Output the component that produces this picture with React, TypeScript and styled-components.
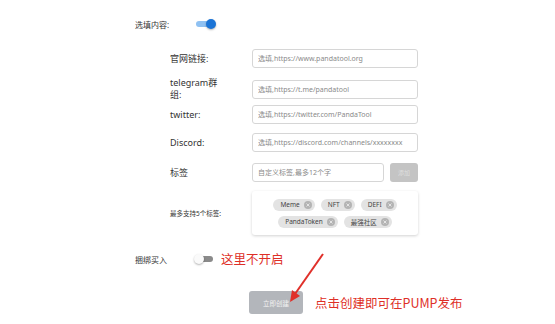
import styled, { createGlobalStyle } from 'styled-components';

const GlobalStyle = createGlobalStyle`
  html, body {
    margin: 0;
    padding: 0;
    background: #fff;
  }
  body {
    font-family: "Noto Sans", "Noto Sans CJK SC", sans-serif;
    color: #333;
  }
`;

const links = [
  { label: '官网链接:', placeholder: '选填,https://www.pandatool.org' },
  { label: 'telegram群\n组:', placeholder: '选填,https://t.me/pandatool' },
  { label: 'twitter:', placeholder: '选填,https://twitter.com/PandaTool' },
  { label: 'Discord:', placeholder: '选填,https://discord.com/channels/xxxxxxxx' },
];

const tags = ['Meme', 'NFT', 'DEFI', 'PandaToken', '最强社区'];

const Switch = ({ on }: { on: boolean }) => (
  <Track $on={on}>
    <Knob $on={on} />
  </Track>
);

const ChipClose = () => (
  <svg width="8" height="8" viewBox="0 0 8 8">
    <circle cx="4" cy="4" r="4" fill="#b4b4b4" />
    <path d="M2.5 2.5 L5.5 5.5 M5.5 2.5 L2.5 5.5" stroke="#e4e4e4" strokeWidth="1" />
  </svg>
);

const App = () => {
  return (
    <Page>
      <GlobalStyle />
      <Form>
        <TopRow>
          <OuterLabel>选填内容:</OuterLabel>
          <Switch on />
        </TopRow>

        <Section>
          {links.map((l) => (
            <Row key={l.label}>
              <Label>{l.label}</Label>
              <Input placeholder={l.placeholder} />
            </Row>
          ))}
          <Row $extraTop={2}>
            <Label>标签</Label>
            <TagInputWrap>
              <Input placeholder="自定义标签,最多12个字" />
              <AddButton>添加</AddButton>
            </TagInputWrap>
          </Row>
          <TagsRow>
            <SmallLabel>最多支持5个标签:</SmallLabel>
            <TagBox>
              {tags.map((t) => (
                <Chip key={t}>
                  {t}
                  <ChipClose />
                </Chip>
              ))}
            </TagBox>
          </TagsRow>
        </Section>

        <BundleRow>
          <OuterLabel>捆绑买入</OuterLabel>
          <Switch on={false} />
          <Note $indent={8}>这里不开启</Note>
        </BundleRow>

        <SubmitRow>
          <SubmitButton>立即创建</SubmitButton>
          <Note>点击创建即可在PUMP发布</Note>
        </SubmitRow>
      </Form>

      <Arrow width="60" height="60" viewBox="0 0 60 60">
        <path d="M36 2 L8 42" stroke="#e0302a" strokeWidth="2" fill="none" />
        <path d="M3 50 L5 38 L13 44 Z" fill="#e0302a" />
      </Arrow>
    </Page>
  );
};

const Page = styled.div`
  position: relative;
  width: 555px;
  height: 324px;
  overflow: hidden;
`;

const Form = styled.div`
  padding: 16px 0 0 135px;
`;

const TopRow = styled.div`
  display: flex;
  align-items: center;
  height: 16px;
`;

const OuterLabel = styled.div`
  width: 61px;
  font-size: 8px;
  color: #333;
`;

const Track = styled.div<{ $on: boolean }>`
  position: relative;
  width: 16px;
  height: 6px;
  border-radius: 3px;
  margin-left: ${(p) => (p.$on ? '0' : '1px')};
  background: ${(p) => (p.$on ? '#8fc1f2' : '#8a8a8a')};
`;

const Knob = styled.div<{ $on: boolean }>`
  position: absolute;
  top: -2px;
  left: ${(p) => (p.$on ? '10px' : '-3px')};
  width: 10px;
  height: 10px;
  border-radius: 50%;
  background: ${(p) => (p.$on ? '#1b74d6' : '#fafafa')};
  box-shadow: 0 1px 2px rgba(0, 0, 0, 0.3);
`;

const Section = styled.div`
  margin-top: 17px;
  padding-left: 35px;
  display: flex;
  flex-direction: column;
  gap: 9px;
`;

const Row = styled.div<{ $extraTop?: number }>`
  display: grid;
  grid-template-columns: 82px 166px;
  align-items: center;
  height: 19px;
  margin-top: ${(p) => p.$extraTop ?? 0}px;
`;

const Label = styled.div`
  font-size: 9px;
  line-height: 12px;
  white-space: pre-line;
  color: #333;
`;

const SmallLabel = styled.div`
  font-size: 6.5px;
  color: #333;
`;

const Input = styled.input`
  box-sizing: border-box;
  width: 100%;
  height: 19px;
  min-width: 0;
  border: 1px solid #d6d6d6;
  border-radius: 3px;
  padding: 0 5px;
  font-family: "Noto Sans", "Noto Sans CJK SC", sans-serif;
  font-size: 7px;
  outline: none;
  background: #fff;
  &::placeholder {
    color: #8a8a8a;
  }
`;

const TagInputWrap = styled.div`
  display: flex;
  gap: 6px;
`;

const AddButton = styled.button`
  flex: 0 0 28px;
  height: 19px;
  border: none;
  border-radius: 3px;
  background: #c4c4c4;
  color: #dedede;
  font-size: 6px;
  padding: 0;
  font-family: "Noto Sans CJK SC", sans-serif;
`;

const TagsRow = styled.div`
  display: grid;
  grid-template-columns: 82px 166px;
  align-items: center;
`;

const TagBox = styled.div`
  display: flex;
  flex-wrap: wrap;
  justify-content: center;
  align-content: center;
  gap: 5px 6px;
  height: 44px;
  box-sizing: border-box;
  padding: 0 8px;
  border-radius: 3px;
  box-shadow: 0 1px 3px rgba(0, 0, 0, 0.18);
`;

const Chip = styled.div`
  display: flex;
  align-items: center;
  gap: 4px;
  height: 12px;
  padding: 0 3px 0 7px;
  border-radius: 6px;
  background: #e3e3e3;
  font-size: 6.5px;
  color: #444;
`;

const BundleRow = styled.div`
  display: flex;
  align-items: center;
  height: 16px;
  margin-top: 16px;
`;

const Note = styled.div<{ $indent?: number }>`
  margin-left: ${(p) => p.$indent ?? 0}px;
  font-family: "Noto Sans CJK SC", sans-serif;
  font-size: 12.5px;
  color: #de2f27;
  line-height: 16px;
`;

const SubmitRow = styled.div`
  display: flex;
  align-items: center;
  gap: 12px;
  margin-top: 24px;
  padding-left: 114px;
`;

const SubmitButton = styled.button`
  width: 54px;
  height: 23px;
  border: none;
  border-radius: 3px;
  background: #b3b6bb;
  color: #f3f3f3;
  font-size: 6.5px;
  padding: 0;
  font-family: "Noto Sans CJK SC", sans-serif;
`;

const Arrow = styled.svg`
  position: absolute;
  left: 287px;
  top: 252px;
`;

export default App;
